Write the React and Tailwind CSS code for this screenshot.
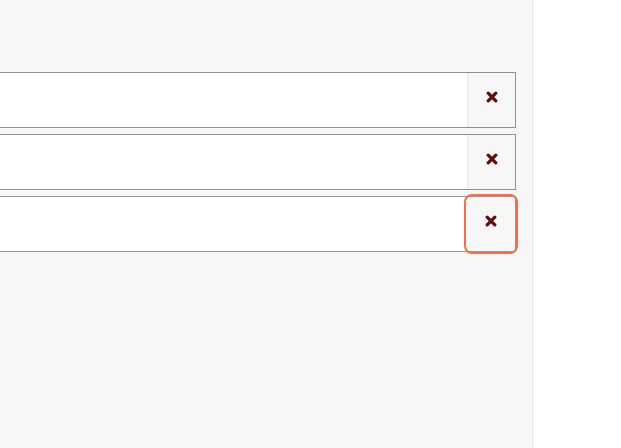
import React from 'react';

// Three text rows, each with a remove button on the right
const ROWS = [
  { id: 'row-1', focused: false },
  { id: 'row-2', focused: false },
  { id: 'row-3', focused: true },
];

// heavy "times" cross, like the font icon in the shot
const CrossIcon = () => (
  <svg viewBox="0 0 12 12" className="w-[12px] h-[12px]" aria-hidden="true">
    <path
      d="M2.2 2.2 L9.8 9.8 M9.8 2.2 L2.2 9.8"
      stroke="#650b0b"
      strokeWidth="3.2"
      strokeLinecap="round"
      fill="none"
    />
  </svg>
);

const Row = ({ focused }) => (
  <div className="flex h-[56px] border border-[#929292] bg-white">
    <input
      type="text"
      className="flex-1 min-w-0 bg-white outline-none px-3"
      aria-label="Value"
    />
    <button
      type="button"
      aria-label="Remove"
      className={
        focused
          ? 'w-[48px] shrink-0 flex items-center justify-center pb-[6px] bg-[#f7f7f7] rounded-[5px] outline-2 outline-[#ff6b45] outline-offset-[1px]'
          : 'w-[48px] shrink-0 flex items-center justify-center pb-[6px] bg-[#f7f7f7] border-l border-[#e8e8e8]'
      }
    >
      <CrossIcon />
    </button>
  </div>
);

export default function App() {
  return (
    <div className="flex h-[448px] w-[621px] overflow-hidden bg-white">
      <div className="w-[533px] shrink-0 bg-[#f7f7f7] border-r border-[#e3e3e3]">
        <div className="ml-[-20px] mr-[16px] mt-[72px] flex flex-col gap-[6px]">
          {ROWS.map((row) => (
            <Row key={row.id} focused={row.focused} />
          ))}
        </div>
      </div>
      <div className="flex-1 bg-white" />
    </div>
  );
}
